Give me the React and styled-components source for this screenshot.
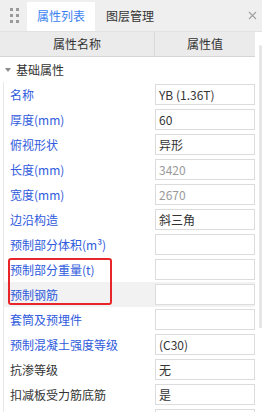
import React from 'react';
import styled, { createGlobalStyle } from 'styled-components';

const GlobalStyle = createGlobalStyle`
    body {
        margin: 0;
        background: #fff;
    }
`;

const StyledPanel = styled.div`
    position: relative;
    width: 262px;
    height: 412px;
    overflow: hidden;
    font-family: "Noto Sans CJK SC", "Microsoft YaHei", sans-serif;
    font-size: 12px;
    color: #333;
    background: #fff;
`;

const StyledTabBar = styled.div`
    display: flex;
    align-items: flex-end;
    height: 32px;
    background: #efefef;
    border-bottom: 1px solid #e2e2e2;
    box-sizing: border-box;
`;

const StyledGrip = styled.div`
    align-self: center;
    display: grid;
    grid-template-columns: repeat(2, 3px);
    grid-gap: 3px;
    width: 27px;
    padding-left: 10px;
    box-sizing: border-box;

    span {
        width: 3px;
        height: 3px;
        background: #9a9a9a;
    }
`;

const StyledTab = styled.div`
    height: 29px;
    line-height: 28px;
    padding: 0 10px 0 ${props => props.active ? 10 : 11}px;
    background: ${props => props.active ? '#fff' : 'transparent'};
    color: ${props => props.active ? '#3b82f0' : '#333'};
    white-space: nowrap;
`;

const StyledClose = styled.div`
    align-self: center;
    margin-left: auto;
    padding-right: 5px;
    display: flex;
`;

const StyledBody = styled.div`
    display: flex;
`;

const StyledMain = styled.div`
    width: 255px;
`;

const StyledGutter = styled.div`
    width: 7px;
    padding: 13px 0 0 4px;
    box-sizing: border-box;
`;

const StyledThumb = styled.div`
    width: 3px;
    height: 283px;
    background: #e6e6e6;
    border-radius: 2px 2px 0 0;
`;

const StyledHeader = styled.div`
    display: flex;
    height: 25px;
    background: #ebebeb;
    border-bottom: 1px solid #d5d5d5;
    box-sizing: border-box;
`;

const StyledHeaderCell = styled.div`
    width: ${props => props.width}px;
    line-height: 24px;
    text-align: center;
    border-right: ${props => props.divider ? '1px solid #d8d8d8' : 'none'};
    box-sizing: border-box;
`;

const StyledSection = styled.div`
    display: flex;
    align-items: center;
    height: 25px;
    padding-left: 5px;
    gap: 5px;
`;

const StyledCaret = styled.span`
    width: 0;
    height: 0;
    border-left: 3px solid transparent;
    border-right: 3px solid transparent;
    border-top: 4px solid #8a8a8a;
`;

const StyledList = styled.div`
    margin-left: 3px;
    border-left: 1px solid #e8e8e8;
`;

const StyledRow = styled.div`
    display: flex;
    height: 25px;
    background: ${props => props.selected ? '#f2f2f2' : 'transparent'};
`;

const StyledLabel = styled.div`
    width: 151px;
    padding-left: 6px;
    line-height: 25px;
    color: ${props => props.plain ? '#333' : '#2f5bdc'};
    white-space: nowrap;
    box-sizing: border-box;
`;

const StyledValue = styled.div`
    width: 100px;
    height: 21px;
    margin-top: 2px;
    padding-left: 3px;
    line-height: 19px;
    border: 1px solid #dcdcdc;
    background: #fff;
    color: ${props => props.disabled ? '#9a9a9a' : '#333'};
    box-sizing: border-box;
    white-space: nowrap;
`;

const StyledMark = styled.div`
    position: absolute;
    left: 8px;
    top: 258px;
    width: 104px;
    height: 47px;
    border: 2px solid #e8262a;
    border-radius: 3px;
    box-sizing: border-box;
    pointer-events: none;
`;

const rows = [
    { label: '名称', value: 'YB (1.36T)' },
    { label: '厚度(mm)', value: '60' },
    { label: '俯视形状', value: '异形' },
    { label: '长度(mm)', value: '3420', disabled: true },
    { label: '宽度(mm)', value: '2670', disabled: true },
    { label: '边沿构造', value: '斜三角' },
    { label: '预制部分体积(m³)', value: '' },
    { label: '预制部分重量(t)', value: '' },
    { label: '预制钢筋', value: '', selected: true },
    { label: '套筒及预埋件', value: '' },
    { label: '预制混凝土强度等级', value: '(C30)' },
    { label: '抗渗等级', value: '无', plain: true },
    { label: '扣减板受力筋底筋', value: '是', plain: true },
    { label: '', value: '' },
];

const App = () => (
    <StyledPanel>
        <GlobalStyle />
        <StyledTabBar>
            <StyledGrip>
                {[0, 1, 2, 3, 4, 5].map(i => <span key={i} />)}
            </StyledGrip>
            <StyledTab active>属性列表</StyledTab>
            <StyledTab>图层管理</StyledTab>
            <StyledClose>
                <svg width="9" height="9" viewBox="0 0 9 9">
                    <path d="M1 1L8 8M8 1L1 8" stroke="#a0a0a0" strokeWidth="1.1" />
                </svg>
            </StyledClose>
        </StyledTabBar>
        <StyledBody>
            <StyledMain>
                <StyledHeader>
                    <StyledHeaderCell width={155} divider>属性名称</StyledHeaderCell>
                    <StyledHeaderCell width={100}>属性值</StyledHeaderCell>
                </StyledHeader>
                <StyledSection>
                    <StyledCaret />
                    基础属性
                </StyledSection>
                <StyledList>
                    {rows.map((row, i) => (
                        <StyledRow key={i} selected={row.selected}>
                            <StyledLabel plain={row.plain}>{row.label}</StyledLabel>
                            <StyledValue disabled={row.disabled}>{row.value}</StyledValue>
                        </StyledRow>
                    ))}
                </StyledList>
            </StyledMain>
            <StyledGutter>
                <StyledThumb />
            </StyledGutter>
        </StyledBody>
        <StyledMark />
    </StyledPanel>
);

export default App;
